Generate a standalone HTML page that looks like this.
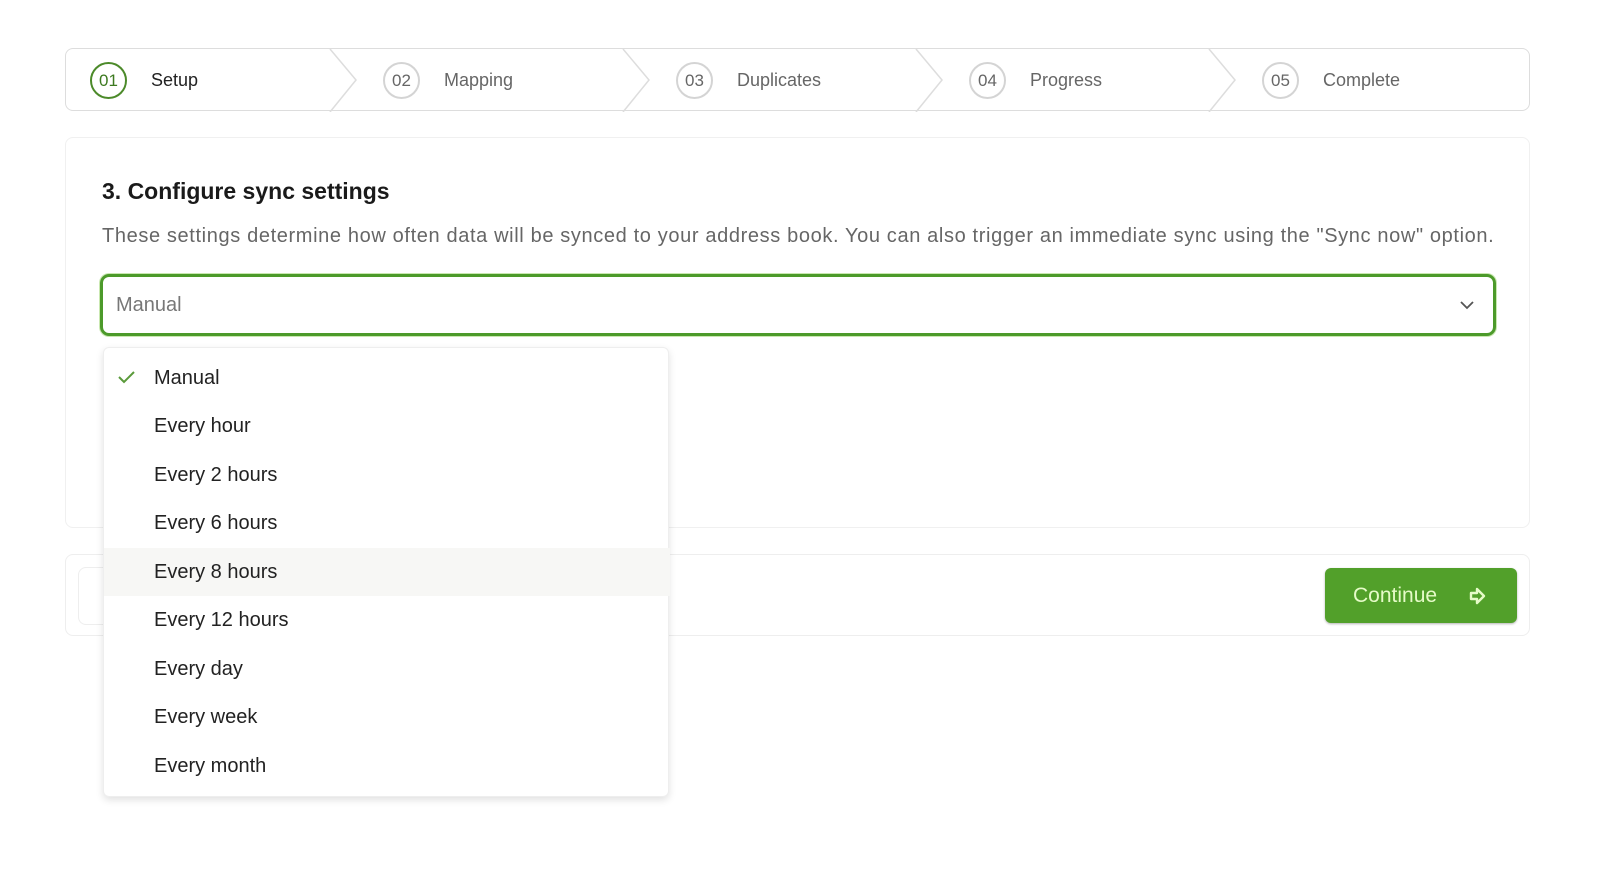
<!DOCTYPE html><html><head><style>
body{margin:0;width:1600px;height:891px;background:#fff;font-family:"Liberation Sans",sans-serif;position:relative;overflow:hidden;color:#222}
.abs{position:absolute}
.step{position:absolute;top:0;height:63px;display:flex;align-items:center}
.circ{border:2px solid #d4d4d4;border-radius:50%;display:flex;align-items:center;justify-content:center;font-size:17px;color:#666;box-sizing:border-box;width:37px;height:37px}
.lbl{margin-left:24px;font-size:18px;color:#666}
.item{position:absolute;left:0;width:566px;height:48px;line-height:48px;padding-left:50px;box-sizing:border-box;font-size:20px;color:#222}
</style></head><body>
<div class="abs" style="left:65px;top:48px;width:1465px;height:63px;border:1px solid #ddd;border-radius:8px;box-sizing:border-box">
<svg class="abs" style="left:0;top:0" width="1465" height="63">
<g fill="none" stroke="#ddd" stroke-width="1.5">
<polyline points="264,0 290,31 264,63"/><polyline points="557,0 583,31 557,63"/><polyline points="850,0 876,31 850,63"/><polyline points="1143,0 1169,31 1143,63"/></g></svg>
<div class="step" style="left:24px"><div class="circ" style="border-color:#4c8a2a;color:#3d7a20">01</div><div class="lbl" style="color:#222">Setup</div></div>
<div class="step" style="left:317px"><div class="circ">02</div><div class="lbl">Mapping</div></div>
<div class="step" style="left:610px"><div class="circ">03</div><div class="lbl">Duplicates</div></div>
<div class="step" style="left:903px"><div class="circ">04</div><div class="lbl">Progress</div></div>
<div class="step" style="left:1196px"><div class="circ">05</div><div class="lbl">Complete</div></div>
</div>
<div class="abs" style="left:65px;top:137px;width:1465px;height:391px;border:1px solid #f0f0f0;border-radius:8px;box-sizing:border-box"></div>
<div class="abs" style="left:102px;top:178px;font-size:23px;font-weight:bold;color:#1a1a1a">3. Configure sync settings</div>
<div class="abs" style="left:102px;top:225px;font-size:20px;letter-spacing:0.63px;color:#666;white-space:nowrap">These settings determine how often data will be synced to your address book. You can also trigger an immediate sync using the "Sync now" option.</div>
<div class="abs" style="left:100px;top:274px;width:1396px;height:62px;border:3px solid #4c9a2a;border-radius:9px;box-sizing:border-box;box-shadow:0 0 0 1px #c9e8b0">
<div class="abs" style="left:13px;top:17px;font-size:20px;color:#777">Manual</div>
<svg class="abs" style="right:18px;top:21px" width="16" height="14"><polyline points="2,4 8,10 14,4" fill="none" stroke="#555" stroke-width="1.8"/></svg>
</div>
<div class="abs" style="left:65px;top:554px;width:1465px;height:82px;border:1px solid #eee;border-radius:8px;box-sizing:border-box"></div>
<div class="abs" style="left:78px;top:567px;width:40px;height:56px;border:1px solid #eee;border-radius:8px"></div>
<div class="abs" style="left:1325px;top:568px;width:192px;height:55px;background:#52a02a;border-radius:6px;color:#e6fbc8;font-size:21px;line-height:55px;box-shadow:0 1px 2px rgba(0,0,0,.3)">
<span style="margin-left:28px">Continue</span>
<svg class="abs" style="left:144px;top:19px" width="18" height="18"><path d="M2,6 H8 V2 L15,9 L8,16 V12 H2 Z" fill="none" stroke="#e6fbc8" stroke-width="2.4" stroke-linejoin="round"/></svg>
</div>
<div class="abs" style="left:103px;top:347px;width:566px;height:450px;background:#fff;border:1px solid #eee;border-radius:6px;box-shadow:0 3px 8px rgba(0,0,0,.12);box-sizing:border-box">
<svg class="abs" style="left:13px;top:21px" width="20" height="16"><polyline points="2,8 7,13 17,3" fill="none" stroke="#5a9a3a" stroke-width="2"/></svg>
<div class="item" style="top:6px">Manual</div>
<div class="item" style="top:54px">Every hour</div>
<div class="item" style="top:103px">Every 2 hours</div>
<div class="item" style="top:151px">Every 6 hours</div>
<div class="item" style="top:200px;background:#f7f7f5">Every 8 hours</div>
<div class="item" style="top:248px">Every 12 hours</div>
<div class="item" style="top:297px">Every day</div>
<div class="item" style="top:345px">Every week</div>
<div class="item" style="top:394px">Every month</div>
</div>
</body></html>
